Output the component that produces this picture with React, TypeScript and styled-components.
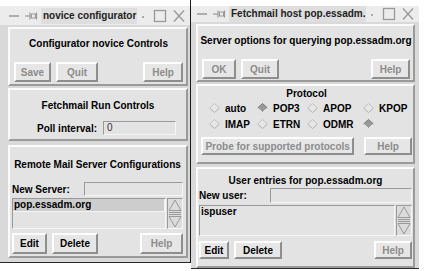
import React from 'react';
import styled, { createGlobalStyle } from 'styled-components';

const GlobalStyle = createGlobalStyle`
  html, body {
    margin: 0;
    padding: 0;
    background: #ffffff;
  }
  body {
    font-family: "Liberation Sans", Arial, sans-serif;
    font-size: 10px;
    font-weight: bold;
    color: #000;
  }
`;

const Desktop = styled.div`
  display: flex;
  align-items: flex-start;
  width: 424px;
  height: 271px;
  overflow: hidden;
  background: #fff;
`;

const Window = styled.div<{ $width: number; $height: number; $edge?: boolean }>`
  width: ${(p) => p.$width}px;
  height: ${(p) => p.$height}px;
  display: flex;
  flex-direction: column;
  padding-top: 6px;
  box-sizing: border-box;
  border-right: ${(p) => (p.$edge ? '1px solid #1a1a1a' : 'none')};
`;

const TitleBar = styled.div<{ $pl: number }>`
  height: 19px;
  display: flex;
  align-items: center;
  background: #ececec;
  padding: 0 4px 0 ${(p) => p.$pl}px;
  gap: 3px;
`;

const TitleText = styled.div`
  flex: 1;
  height: 16px;
  line-height: 16px;
  background: #dedede;
  padding-left: 2px;
  font-size: 10px;
  color: #222;
  white-space: nowrap;
  overflow: hidden;
`;

const Body = styled.div<{ $pl: number; $pr: number }>`
  flex: 1;
  display: flex;
  flex-direction: column;
  background: #d9d9d9;
  padding: 2px ${(p) => p.$pr}px 0 ${(p) => p.$pl}px;
  border-bottom: 1px solid #2a2a2a;
`;

const Panel = styled.div<{ $mt?: number; $px?: string; $pb?: number }>`
  margin-top: ${(p) => p.$mt ?? 0}px;
  display: flex;
  flex-direction: column;
  background: #e3e3e3;
  border: 2px solid;
  border-color: #fbfbfb #9a9a9a #9a9a9a #fbfbfb;
  padding: 0 ${(p) => p.$px ?? '3px'} ${(p) => p.$pb ?? 4}px;
`;

const Heading = styled.div<{ $h: number; $pt?: number }>`
  height: ${(p) => p.$h}px;
  padding-top: ${(p) => p.$pt ?? 0}px;
  box-sizing: border-box;
  display: flex;
  align-items: center;
  justify-content: center;
  white-space: nowrap;
`;

const ButtonRow = styled.div<{ $mt: number }>`
  display: flex;
  align-items: center;
  gap: 5px;
  margin-top: ${(p) => p.$mt}px;
`;

const Spacer = styled.div`
  flex: 1;
`;

const Button = styled.div<{ $w: number; $h: number; $dim?: boolean }>`
  width: ${(p) => p.$w}px;
  height: ${(p) => p.$h}px;
  box-sizing: border-box;
  display: flex;
  align-items: center;
  justify-content: center;
  background: #e6e6e6;
  border: 2px solid;
  border-color: #fdfdfd #8e8e8e #8e8e8e #fdfdfd;
  color: ${(p) => (p.$dim ? '#8c8c8c' : '#000')};
  white-space: nowrap;
`;

const FieldRow = styled.div<{ $mt: number; $h: number; $pl?: number }>`
  display: flex;
  align-items: center;
  margin-top: ${(p) => p.$mt}px;
  height: ${(p) => p.$h}px;
  padding-left: ${(p) => p.$pl ?? 0}px;
`;

const Label = styled.div<{ $w: number }>`
  width: ${(p) => p.$w}px;
  white-space: nowrap;
`;

const Entry = styled.div<{ $w?: number }>`
  ${(p) => (p.$w ? `width: ${p.$w}px;` : 'flex: 1;')}
  height: 100%;
  box-sizing: border-box;
  background: #e3e3e3;
  border: 1px solid;
  border-color: #9a9a9a #f6f6f6 #f6f6f6 #9a9a9a;
  padding-left: 3px;
  font-weight: normal;
  color: #333;
  line-height: 11px;
`;

const ListArea = styled.div<{ $mt: number; $h: number }>`
  display: flex;
  gap: 1px;
  margin-top: ${(p) => p.$mt}px;
  height: ${(p) => p.$h}px;
`;

const ListBox = styled.div`
  flex: 1;
  box-sizing: border-box;
  background: #e3e3e3;
  border: 1px solid;
  border-color: #9a9a9a #f6f6f6 #f6f6f6 #9a9a9a;
`;

const ListItem = styled.div<{ $selected?: boolean }>`
  height: 12px;
  line-height: 12px;
  padding-left: 1px;
  background: ${(p) => (p.$selected ? '#cdcdcd' : 'transparent')};
  border-bottom: ${(p) => (p.$selected ? '1px solid #f4f4f4' : '1px solid transparent')};
  border-right: ${(p) => (p.$selected ? '1px solid #f4f4f4' : '1px solid transparent')};
`;

const ScrollBar = styled.div`
  width: 16px;
  box-sizing: border-box;
  border: 1px solid;
  border-color: #9a9a9a #f6f6f6 #f6f6f6 #9a9a9a;
  background: #dcdcdc;
`;

const RadioGrid = styled.div`
  display: grid;
  grid-template-columns: 48px 50px 56px 50px;
  grid-auto-rows: 16px;
  padding-left: 8px;
`;

const Radio = styled.div`
  display: flex;
  align-items: center;
  gap: 5px;
  white-space: nowrap;
`;

const Diamond = ({ on }: { on?: boolean }): JSX.Element => (
  <svg width="11" height="10" viewBox="0 0 11 10">
    <polygon points="5.5,0.5 10.5,5 5.5,9.5 0.5,5" fill={on ? '#9a9a9a' : '#e6e6e6'} />
    <polyline points="0.5,5 5.5,0.5 10.5,5" fill="none" stroke={on ? '#777' : '#c4c4c4'} strokeWidth="1" />
    <polyline points="0.5,5 5.5,9.5 10.5,5" fill="none" stroke={on ? '#f0f0f0' : '#b0b0b0'} strokeWidth="1" />
  </svg>
);

const ScrollArrows = ({ h }: { h: number }): JSX.Element => (
  <svg width="14" height={h} viewBox={`0 0 14 ${h}`}>
    <polygon points={`7,1 13,${h / 2 - 3} 1,${h / 2 - 3}`} fill="none" stroke="#9a9a9a" strokeWidth="1" />
    <line x1="1" y1={h / 2 - 1} x2="13" y2={h / 2 - 1} stroke="#9a9a9a" />
    <line x1="1" y1={h / 2 + 1} x2="13" y2={h / 2 + 1} stroke="#9a9a9a" />
    <polygon points={`1,${h / 2 + 3} 13,${h / 2 + 3} 7,${h - 1}`} fill="none" stroke="#9a9a9a" strokeWidth="1" />
  </svg>
);

const LeftIcons = (): JSX.Element => (
  <svg width="30" height="10" viewBox="0 0 30 10">
    <line x1="1" y1="5" x2="11" y2="5" stroke="#999" strokeWidth="1.5" />
    <line x1="17" y1="5" x2="22" y2="5" stroke="#999" strokeWidth="1.2" />
    <line x1="22" y1="1.5" x2="22" y2="8.5" stroke="#999" strokeWidth="1.2" />
    <rect x="23.5" y="3" width="4" height="4" fill="none" stroke="#999" strokeWidth="1" />
    <line x1="28.5" y1="1.5" x2="28.5" y2="8.5" stroke="#999" strokeWidth="1.2" />
  </svg>
);

const RightIcons = (): JSX.Element => (
  <svg width="46" height="14" viewBox="0 0 46 14">
    <rect x="2" y="7" width="2" height="2" fill="#aaa" />
    <rect x="14.5" y="1.5" width="11" height="11" fill="none" stroke="#999" strokeWidth="1.3" />
    <line x1="34" y1="1.5" x2="44" y2="12.5" stroke="#999" strokeWidth="1.3" />
    <line x1="44" y1="1.5" x2="34" y2="12.5" stroke="#999" strokeWidth="1.3" />
  </svg>
);

const Title = ({ text, pl }: { text: string; pl: number }): JSX.Element => (
  <TitleBar $pl={pl}>
    <LeftIcons />
    <TitleText>{text}</TitleText>
    <RightIcons />
  </TitleBar>
);

const NoviceWindow = (): JSX.Element => (
  <Window $width={191} $height={263} $edge>
    <Title text="novice configurator" pl={8} />
    <Body $pl={8} $pr={2}>
      <Panel $px="3px 2px">
        <Heading $h={28}>Configurator novice Controls</Heading>
        <ButtonRow $mt={5}>
          <Button $w={37} $h={20} $dim>Save</Button>
          <Button $w={42} $h={20} $dim>Quit</Button>
          <Spacer />
          <Button $w={40} $h={20} $dim>Help</Button>
        </ButtonRow>
      </Panel>
      <Panel $mt={2}>
        <Heading $h={31}>Fetchmail Run Controls</Heading>
        <FieldRow $mt={0} $h={14} $pl={24}>
          <Label $w={66}>Poll interval:</Label>
          <Entry $w={73}>0</Entry>
        </FieldRow>
      </Panel>
      <Panel $mt={4} $pb={2} $px="3px 2px">
        <Heading $h={34}>Remote Mail Server Configurations</Heading>
        <FieldRow $mt={1} $h={14}>
          <Label $w={72}>New Server:</Label>
          <Entry />
        </FieldRow>
        <ListArea $mt={2} $h={31}>
          <ListBox>
            <ListItem $selected>pop.essadm.org</ListItem>
          </ListBox>
          <ScrollBar>
            <ScrollArrows h={29} />
          </ScrollBar>
        </ListArea>
        <ButtonRow $mt={4}>
          <Button $w={35} $h={21}>Edit</Button>
          <Button $w={46} $h={21}>Delete</Button>
          <Spacer />
          <Button $w={43} $h={21} $dim>Help</Button>
        </ButtonRow>
      </Panel>
    </Body>
  </Window>
);

const HostWindow = (): JSX.Element => (
  <Window $width={228} $height={267}>
    <Title text="Fetchmail host pop.essadm." pl={5} />
    <Body $pl={5} $pr={4}>
      <Panel $px="3px 1px">
        <Heading $h={28}>Server options for querying pop.essadm.org</Heading>
        <ButtonRow $mt={5}>
          <Button $w={34} $h={20} $dim>OK</Button>
          <Button $w={38} $h={20} $dim>Quit</Button>
          <Spacer />
          <Button $w={39} $h={20} $dim>Help</Button>
        </ButtonRow>
      </Panel>
      <Panel $mt={2} $pb={3} $px="1px 7px">
        <Heading $h={14}>Protocol</Heading>
        <RadioGrid>
          <Radio><Diamond />auto</Radio>
          <Radio><Diamond on />POP3</Radio>
          <Radio><Diamond />APOP</Radio>
          <Radio><Diamond />KPOP</Radio>
          <Radio><Diamond />IMAP</Radio>
          <Radio><Diamond />ETRN</Radio>
          <Radio><Diamond />ODMR</Radio>
          <Radio><Diamond on /></Radio>
        </RadioGrid>
        <ButtonRow $mt={5}>
          <Button $w={154} $h={18} $dim>Probe for supported protocols</Button>
          <Spacer />
          <Button $w={48} $h={18} $dim>Help</Button>
        </ButtonRow>
      </Panel>
      <Panel $mt={3} $pb={1} $px="1px 7px">
        <Heading $h={18} $pt={4}>User entries for pop.essadm.org</Heading>
        <FieldRow $mt={1} $h={15}>
          <Label $w={71}>New user:</Label>
          <Entry />
        </FieldRow>
        <ListArea $mt={2} $h={31}>
          <ListBox>
            <ListItem>ispuser</ListItem>
          </ListBox>
          <ScrollBar>
            <ScrollArrows h={29} />
          </ScrollBar>
        </ListArea>
        <ButtonRow $mt={5}>
          <Button $w={30} $h={18}>Edit</Button>
          <Button $w={48} $h={18}>Delete</Button>
          <Spacer />
          <Button $w={38} $h={18} $dim>Help</Button>
        </ButtonRow>
      </Panel>
    </Body>
  </Window>
);

const App = (): JSX.Element => (
  <Desktop>
    <GlobalStyle />
    <NoviceWindow />
    <HostWindow />
  </Desktop>
);

export default App;
